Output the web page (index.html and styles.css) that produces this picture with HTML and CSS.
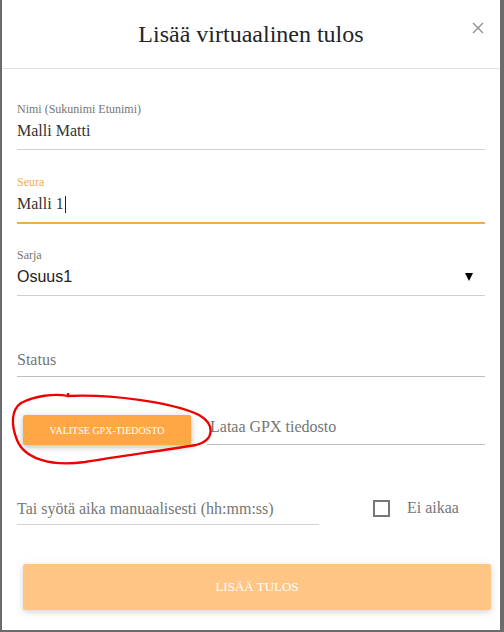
FILE: index.html
```html
<!DOCTYPE html>
<html lang="fi">
<head>
<meta charset="utf-8">
<title>Lisää virtuaalinen tulos</title>
<link rel="stylesheet" href="styles.css">
</head>
<body>
<div class="modal">
  <div class="modal-header">
    <span></span>
    <h4 class="modal-title">Lisää virtuaalinen tulos</h4>
    <button class="close" aria-label="Sulje">
      <svg width="12" height="12" viewBox="0 0 12 12"><path d="M1 1 L11 11 M11 1 L1 11" stroke="#8f8f8f" stroke-width="1.4" fill="none"/></svg>
    </button>
  </div>
  <div class="modal-body">
    <div class="field first">
      <div class="label">Nimi (Sukunimi Etunimi)</div>
      <div class="value">Malli Matti</div>
    </div>
    <div class="field focused">
      <div class="label">Seura</div>
      <div class="value">Malli 1<span class="caret"></span></div>
    </div>
    <div class="field select">
      <div class="label">Sarja</div>
      <div class="value sans">
        <span>Osuus1</span>
        <svg width="8" height="8" viewBox="0 0 8 8"><polygon points="0,0 8,0 4,8" fill="#000"/></svg>
      </div>
    </div>
    <div class="field status">
      <div class="value placeholder">Status</div>
    </div>
    <div class="gpx-row">
      <button class="btn btn-file">VALITSE GPX-TIEDOSTO</button>
      <div class="file-path placeholder">Lataa GPX tiedosto</div>
    </div>
    <div class="time-row">
      <div class="time-input placeholder">Tai syötä aika manuaalisesti (hh:mm:ss)</div>
      <div class="check">
        <span class="box"></span>
        <span class="check-label">Ei aikaa</span>
      </div>
    </div>
    <button class="btn btn-submit">LISÄÄ TULOS</button>
  </div>
</div>
<svg class="annotation" width="504" height="632" viewBox="0 0 504 632">
  <path d="M68 393 L68 396 C110 394 172 402 199 415 C215 424 215 440 196 445 C160 451 120 456 85 462 C50 467 24 458 17 440 C11 425 11 410 21 403 C34 396 55 393 68 396" fill="none" stroke="#ee0000" stroke-width="2.3"/>
</svg>
</body>
</html>
```

FILE: styles.css
```css
* { box-sizing: border-box; }
html, body { margin: 0; padding: 0; }
body {
  background: #6b6b6b;
  width: 504px;
  height: 632px;
  overflow: hidden;
  position: relative;
  font-family: "Liberation Serif", "Times New Roman", serif;
}
.modal {
  margin-left: 2px;
  width: 498px;
  height: 630px;
  background: #fff;
}
.modal-header {
  display: grid;
  grid-template-columns: 1fr auto 1fr;
  padding: 20px 16px 19px;
  border-bottom: 1px solid #dee2e6;
}
.modal-title {
  margin: 0;
  font-weight: normal;
  font-size: 24px;
  line-height: 29px;
  color: #212529;
}
.close {
  justify-self: end;
  align-self: start;
  margin-top: 2px;
  padding: 0;
  border: 0;
  background: none;
  width: 12px;
  height: 12px;
  display: block;
}
.close svg { display: block; }
.modal-body {
  padding: 0 15px;
}
.field {
  margin-top: 25px;
  border-bottom: 1px solid #d2d2d2;
}
.field.first { margin-top: 33px; }
.label {
  font-size: 12px;
  line-height: 14px;
  color: #757575;
  margin-bottom: 5px;
}
.value {
  font-size: 16px;
  line-height: 20px;
  color: #333;
  padding-bottom: 8px;
}
.focused {
  border-bottom-color: #f0ad4e;
  box-shadow: 0 1px 0 0 #f0ad4e;
}
.focused .label { color: #f0ad4e; }
.caret {
  display: inline-block;
  width: 1px;
  height: 17px;
  background: #222;
  vertical-align: -4px;
  margin-left: 1px;
}
.select { border-bottom-color: #cfcfcf; }
.sans {
  font-family: "Liberation Sans", Arial, sans-serif;
  color: #222;
  display: flex;
  justify-content: space-between;
  align-items: center;
  padding-right: 12px;
}
.status {
  margin-top: 54px;
  border-bottom-color: #bdbdbd;
}
.status .value { padding-bottom: 6px; }
.placeholder { color: #757575; }
.gpx-row {
  display: flex;
  align-items: flex-end;
  gap: 16px;
  margin-top: 38px;
}
.btn {
  border: 0;
  color: #fff;
  font-family: "Liberation Serif", "Times New Roman", serif;
  border-radius: 2px;
  box-shadow: 0 2px 5px 0 rgba(0,0,0,.16), 0 2px 10px 0 rgba(0,0,0,.12);
  padding: 0;
}
.btn-file {
  margin-left: 6px;
  width: 168px;
  height: 30px;
  background: #ffa745;
  font-size: 10px;
}
.file-path {
  flex: 1;
  font-size: 16px;
  line-height: 20px;
  padding: 0 0 7px 3px;
  border-bottom: 1px solid #bdbdbd;
}
.time-row {
  display: flex;
  align-items: flex-end;
  margin-top: 53px;
}
.time-input {
  width: 302px;
  font-size: 16px;
  line-height: 20px;
  padding-bottom: 5px;
  border-bottom: 1px solid #ced4da;
}
.check {
  display: flex;
  align-items: center;
  margin-left: 54px;
  margin-bottom: 7px;
}
.box {
  width: 17px;
  height: 17px;
  border: 2px solid #777;
  display: block;
}
.check-label {
  margin-left: 17px;
  font-size: 16px;
  line-height: 20px;
  color: #757575;
}
.btn-submit {
  display: block;
  margin: 39px 0 0 6px;
  width: 468px;
  height: 46px;
  background: #ffa745;
  opacity: .65;
  font-size: 13px;
}
.annotation {
  position: absolute;
  left: 0;
  top: 0;
  pointer-events: none;
}
```
